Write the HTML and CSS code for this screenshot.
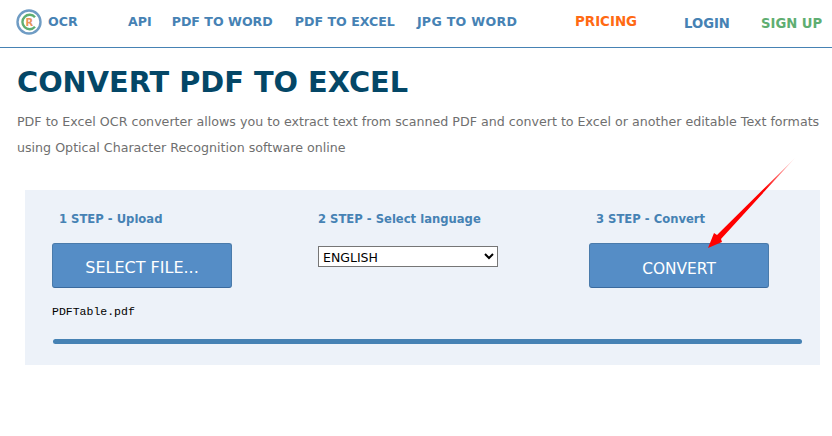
FILE: index.html
```html
<!DOCTYPE html>
<html lang="en">

<head>
    <meta charset="UTF-8">
    <meta name="viewport" content="width=device-width, initial-scale=1.0">
    <title>Convert PDF to Excel</title>
    <link rel="stylesheet" href="styles.css">
</head>

<body>
    <header class="topbar">
        <a class="logo" href="#">
            <svg class="logo-mark" width="28" height="26" viewBox="0 0 28 26">
                <circle cx="14" cy="13" r="11.5" fill="#fff" stroke="#6f9cc4" stroke-width="2.4"/>
                <path d="M20 8.2 A7.2 7.2 0 1 0 20 17.8" fill="none" stroke="#5fae72" stroke-width="2.4"/>
                <text x="14.4" y="17" class="logo-r">R</text>
            </svg>
            <span>OCR</span>
        </a>
        <nav class="nav-main">
            <a href="#">API</a>
            <a href="#">PDF TO WORD</a>
            <a href="#">PDF TO EXCEL</a>
            <a href="#">JPG TO WORD</a>
        </nav>
        <a class="pricing" href="#">PRICING</a>
        <a class="login" href="#">LOGIN</a>
        <a class="signup" href="#">SIGN UP</a>
    </header>

    <main class="content">
        <h1>CONVERT PDF TO EXCEL</h1>
        <p class="intro">PDF to Excel OCR converter allows you to extract text from scanned PDF and convert to Excel or another editable Text formats using Optical Character Recognition software online</p>

        <section class="panel">
            <div class="steps">
                <div class="step step-upload">
                    <h3>1 STEP - Upload</h3>
                    <button class="btn btn-select">SELECT FILE...</button>
                </div>
                <div class="step step-lang">
                    <h3>2 STEP - Select language</h3>
                    <select class="lang">
                        <option>ENGLISH</option>
                    </select>
                </div>
                <div class="step step-convert">
                    <h3>3 STEP - Convert</h3>
                    <button class="btn btn-convert">CONVERT</button>
                </div>
            </div>
            <div class="filename">PDFTable.pdf</div>
            <div class="progress"></div>
        </section>
    </main>

    <svg class="arrow" width="100" height="100" viewBox="0 0 100 100">
        <defs>
            <linearGradient id="fade" x1="1" y1="0" x2="0" y2="1">
                <stop offset="0" stop-color="#ff0000" stop-opacity="0.1"/>
                <stop offset="0.35" stop-color="#ff0000"/>
            </linearGradient>
        </defs>
        <path d="M94 3 L20 84 L21 87 L7 93 L13 78 L16 80 Z" fill="url(#fade)"/>
    </svg>
</body>

</html>
```

FILE: styles.css
```css
html, body {
    margin: 0;
    height: 100%;
    overflow: hidden;
}

body {
    position: relative;
    background-color: #fff;
    font-family: "DejaVu Sans", Verdana, sans-serif;
}

a {
    text-decoration: none;
}

.topbar {
    display: flex;
    align-items: center;
    height: 43px;
    padding-bottom: 4px;
    border-bottom: 1px solid #4682b4;
    font-size: 12.6px;
    font-weight: bold;
    white-space: nowrap;
}

.logo {
    display: flex;
    align-items: center;
    gap: 5px;
    width: 128px;
    padding-left: 15px;
    box-sizing: border-box;
    color: #4682b4;
}

.logo-mark {
    flex: none;
}

.logo-r {
    font-size: 10px;
    font-weight: bold;
    fill: #e8935a;
    text-anchor: middle;
}

.nav-main {
    display: flex;
    width: 447px;
}

.nav-main a {
    margin-right: 22px;
    color: #4682b4;
}

.nav-main a:first-child {
    margin-right: 20px;
}

.nav-main a:last-child {
    letter-spacing: 0.3px;
}

.pricing {
    width: 109px;
    font-size: 13.4px;
    color: #ff6a13;
}

.login {
    width: 77px;
    padding-top: 3px;
    font-size: 13.2px;
    color: #4682b4;
}

.signup {
    padding-top: 3px;
    font-size: 13.2px;
    color: #5fae72;
}

.content {
    padding: 15px 8px 0 17px;
}

h1 {
    margin: 0;
    font-size: 28.8px;
    line-height: 38px;
    color: #044767;
}

.intro {
    margin: 8px 0 0;
    font-size: 12.65px;
    line-height: 26px;
    color: #6f6f6f;
}

.panel {
    margin: 29px 4px 0 8px;
    padding: 21px 18px 21px 27px;
    background-color: #edf2f9;
}

.steps {
    display: flex;
}

.step-upload {
    width: 266px;
}

.step-lang {
    width: 271px;
}

h3 {
    margin: 0 0 16px 7px;
    font-size: 11.6px;
    line-height: 16px;
    font-weight: bold;
    color: #4682b4;
}

.step-lang h3 {
    margin-left: 0;
    margin-bottom: 19px;
}

.btn {
    display: block;
    width: 180px;
    height: 45px;
    padding: 0;
    border: 1px solid #4a7bab;
    border-bottom-color: #3a6a9e;
    border-radius: 3px;
    background-color: #558dc6;
    color: #fff;
    font-family: inherit;
}

.btn-select {
    padding-top: 3px;
    font-size: 16px;
}

.btn-convert {
    padding-top: 7px;
    font-size: 15.4px;
}

.lang {
    display: block;
    width: 180px;
    height: 21px;
    padding: 2px 0 0;
    background-color: #fff;
    border: 1px solid #767676;
    border-radius: 0;
    font-family: inherit;
    font-size: 12.5px;
    color: #000;
}

.filename {
    margin-top: 17px;
    font-family: "Liberation Mono", "Courier New", monospace;
    font-size: 11.5px;
    line-height: 14px;
    color: #000;
}

.progress {
    height: 5px;
    margin-top: 20px;
    margin-left: 1px;
    border-radius: 3px;
    background-color: #4682b4;
}

.arrow {
    position: absolute;
    left: 701px;
    top: 155px;
}
```
